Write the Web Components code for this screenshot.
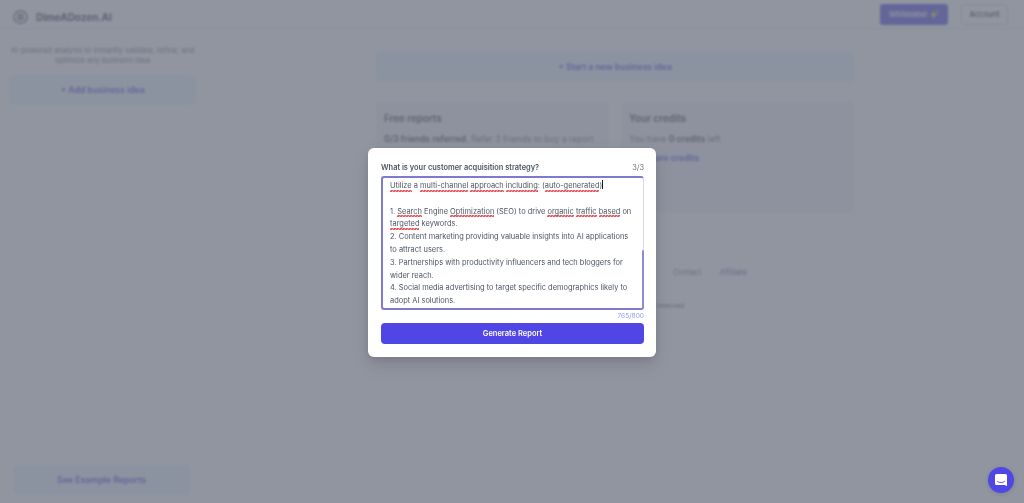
<!DOCTYPE html>
<html lang="en">
<head>
<meta charset="utf-8">
<title>DimeADozen.AI</title>
<style>
    html, body { margin: 0; height: 100%; background: #fff; overflow: hidden; }
    body { font-family: Inter, "Liberation Sans", sans-serif; }
</style>
</head>
<body>
<dad-app>
    <dad-header slot="header"></dad-header>
    <dad-sidebar slot="sidebar"></dad-sidebar>
    <dad-main slot="main"></dad-main>
</dad-app>
<dad-modal>
    <span slot="title">What is your customer acquisition strategy?</span>
    <span slot="step">3/3</span>
</dad-modal>
<dad-chat></dad-chat>

<script>
// base class: every element just stamps its html into an open shadow root
class Base extends HTMLElement {
    constructor(html) {
        super();
        const shadow = this.attachShadow({ mode: 'open' });
        const template = document.createElement('template');
        template.innerHTML = html;
        shadow.appendChild(template.content.cloneNode(true));
    }
}

class DadApp extends Base {
    constructor() {
        super(`
            <style>
                :host { display: flex; flex-direction: column; height: 503px; }
                .body { flex: 1; display: flex; min-height: 0; }
            </style>
            <slot name="header"></slot>
            <div class="body">
                <slot name="sidebar"></slot>
                <slot name="main"></slot>
            </div>
        `);
    }
}

class DadHeader extends Base {
    constructor() {
        super(`
            <style>
                :host {
                    display: flex; align-items: center; justify-content: space-between;
                    height: 29px; box-sizing: border-box; padding: 0 16px 0 13px;
                    border-bottom: 1px solid #e5e7eb;
                }
                .logo { display: flex; align-items: center; gap: 8px; margin-top: 6px; font-size: 9.9px; font-weight: 700; color: #374151; }
                .logo svg { display: block; }
                .actions { display: flex; align-items: center; gap: 13px; }
                .btn { font-size: 7.5px; font-weight: 500; height: 21px; display: flex; align-items: center; box-sizing: border-box; border-radius: 3px; }
                .white { background: #4f46e5; color: #fff; width: 68px; justify-content: center; gap: 3px; }
                .account { width: 47px; justify-content: center; border: 1px solid #d1d5db; color: #1f2937; }
            </style>
            <div class="logo">
                <svg width="15" height="14" viewBox="0 0 15 14" fill="none" stroke="#374151">
                    <ellipse cx="7.5" cy="7" rx="6.6" ry="6.2" stroke-width="1.2"/>
                    <rect x="5" y="4.5" width="5" height="5" stroke-width="1"/>
                    <path d="M7.5 4.5v5M5 7h5" stroke-width=".8"/>
                </svg>
                <span>DimeADozen.AI</span>
            </div>
            <div class="actions">
                <div class="btn white">Whitelabel
                    <svg width="9" height="9" viewBox="0 0 8 8" fill="#ffd23f">
                        <path d="M3.2 .6 4.2 3.2 6.8 4.2 4.2 5.2 3.2 8 2.2 5.2 0 4.2 2.2 3.2z"/>
                        <path d="M6.5 0 7 1 8 1.5 7 2 6.5 3 6 2 5 1.5 6 1z"/>
                    </svg>
                </div>
                <div class="btn account">Account</div>
            </div>
        `);
    }
}

class DadSidebar extends Base {
    constructor() {
        super(`
            <style>
                :host {
                    display: flex; flex-direction: column; width: 205px; flex: none;
                    box-sizing: border-box; padding: 17px 9px 8px;
                }
                p { margin: 0 0 9px; text-align: center; font-size: 7.45px; line-height: 10px; color: #6b7280; }
                .add { height: 30px; display: flex; align-items: center; justify-content: center; background: #eff6ff; border-radius: 5px; color: #4f46e5; font-size: 8.6px; font-weight: 600; }
                .example { margin: auto 6px 0 4px; height: 30px; display: flex; align-items: center; justify-content: center; background: #eff6ff; border-radius: 5px; color: #4f46e5; font-size: 8.7px; font-weight: 600; }
            </style>
            <p>AI-powered analysis to instantly validate, refine, and optimize any business idea</p>
            <div class="add">+ Add business idea</div>
            <div class="example">See Example Reports</div>
        `);
    }
}

class DadCard extends Base {
    constructor() {
        super(`
            <style>
                :host { display: block; background: #f3f4f6; border-radius: 4px; padding: 10px 8px; height: 111px; box-sizing: border-box; color: #6b7280; font-size: 8.6px; }
                h2 { margin: 0 0 8px; font-size: 9.8px; line-height: 13px; font-weight: 600; color: #374151; }
                div { line-height: 13px; }
            </style>
            <h2><slot name="title"></slot></h2>
            <div><slot></slot></div>
        `);
    }
}

class DadMain extends Base {
    constructor() {
        super(`
            <style>
                :host { display: block; flex: 1; min-width: 0; box-sizing: border-box; padding: 23px 170px 0 171px; }
                .start { height: 30px; display: flex; align-items: center; justify-content: center; background: #eff6ff; border-radius: 4px; color: #4f46e5; font-size: 8.55px; font-weight: 600; }
                .cards { display: grid; grid-template-columns: 233px 233px; gap: 12px; margin-top: 20px; }
                .link { color: #4f46e5; font-weight: 600; display: block; margin-top: 6px; }
                b { font-weight: 600; color: #374151; }
                .links { display: flex; gap: 18px; justify-content: flex-end; padding-right: 107px; margin-top: 55px; font-size: 7.7px; line-height: 10px; color: #6b7280; }
                .links span + span { color: #5f62a8; }
                .copy { text-align: right; padding-right: 170px; margin-top: 24px; font-size: 6.5px; line-height: 8px; color: #4b5563; }
            </style>
            <div class="start">+ Start a new business idea</div>
            <div class="cards">
                <dad-card>
                    <span slot="title">Free reports</span>
                    <b>0/3 friends referred.</b> Refer 3 friends to buy a report
                </dad-card>
                <dad-card>
                    <span slot="title">Your credits</span>
                    You have <b>0 credits</b> left.
                    <span class="link">Buy more credits</span>
                </dad-card>
            </div>
            <div class="links"><span>Contact</span><span>Affiliate</span></div>
            <div class="copy">All rights reserved</div>
        `);
    }
}

class DadModal extends Base {
    constructor() {
        super(`
            <style>
                :host {
                    position: fixed; inset: 0; display: block;
                    background: rgba(107, 114, 128, .75);
                    backdrop-filter: blur(1px);
                    color: #4b5563;
                }
                .box {
                    position: absolute; left: 368px; top: 148px; width: 288px; height: 209px;
                    box-sizing: border-box; padding: 13px 12px 0 13px;
                    background: #fff; border-radius: 6px;
                    box-shadow: 0 8px 18px rgba(0,0,0,.12), 0 3px 6px rgba(0,0,0,.08);
                    display: flex; flex-direction: column;
                }
                .head { display: flex; justify-content: space-between; align-items: center; height: 12px; margin-bottom: 3px; font-size: 7.45px; }
                .title { font-weight: 600; color: #4b5563; }
                .step { color: #6b7280; }
                .wrap { position: relative; height: 134px; }
                .area {
                    height: 134px; box-sizing: border-box;
                    border: 2px solid #7f79d0; border-right: 1px solid #d9d8ee; border-radius: 3px;
                    padding: 2px 8px 0 7px; font-size: 7.45px; line-height: 12.8px; color: #4b5563; white-space: pre-wrap; overflow: hidden;
                }
                /* scrollbar-looking strip lower down the right edge */
                .thumb { position: absolute; right: 0; top: 74px; bottom: 1px; width: 2px; background: #8f8ad6; border-radius: 1px; }
                /* spell check squiggle: two gradient layers make the zigzag */
                u {
                    text-decoration: none; padding-bottom: 1.5px;
                    background:
                        linear-gradient(135deg, transparent 35%, #e25a5f 35%, #e25a5f 65%, transparent 65%) 0 100% / 3px 2px repeat-x,
                        linear-gradient(45deg, transparent 35%, #e25a5f 35%, #e25a5f 65%, transparent 65%) 1.5px 100% / 3px 2px repeat-x;
                }
                .caret { display: inline-block; width: 1px; height: 9px; background: #111827; vertical-align: -1px; }
                .count { text-align: right; font-size: 6.6px; line-height: 13px; color: #8b9cf0; }
                .go { height: 21px; display: flex; align-items: center; justify-content: center; background: #4f46e5; border-radius: 4px; color: #fff; font-size: 7.5px; font-weight: 600; }
            </style>
            <div class="box">
                <div class="head">
                    <span class="title"><slot name="title"></slot></span>
                    <span class="step"><slot name="step"></slot></span>
                </div>
                <div class="wrap">
                <div class="area"><u>Utilize</u> a <u>multi-channel</u> <u>approach</u> <u>including</u>: (<u>auto-generated</u>)<span class="caret"></span>

1. <u>Search</u> Engine <u>Optimization</u> (SEO) to drive <u>organic</u> <u>traffic</u> <u>based</u> on <u>targeted</u> keywords.
2. Content marketing providing valuable insights into AI applications to attract users.
3. Partnerships with productivity influencers and tech bloggers for wider reach.
4. Social media advertising to target specific demographics likely to adopt AI solutions.</div>
                <div class="thumb"></div>
                </div>
                <div class="count">765/800</div>
                <div class="go">Generate Report</div>
            </div>
        `);
    }
}

class DadChat extends Base {
    constructor() {
        super(`
            <style>
                :host {
                    position: fixed; left: 988px; top: 467px; width: 26px; height: 26px; border-radius: 50%;
                    background: #4f46e5; display: flex; align-items: center; justify-content: center;
                    box-shadow: 0 1px 4px rgba(0,0,0,.15);
                }
                svg { display: block; }
            </style>
            <svg width="12" height="12" viewBox="0 0 12 12">
                <path d="M1.5 0h9A1.5 1.5 0 0 1 12 1.5V12l-2.5-1h-8A1.5 1.5 0 0 1 0 9.5v-8A1.5 1.5 0 0 1 1.5 0z" fill="#fff"/>
                <path d="M2.5 7.5c2 1.6 5 1.6 7 0" fill="none" stroke="#4f46e5" stroke-width=".9" stroke-linecap="round"/>
            </svg>
        `);
    }
}

customElements.define('dad-app', DadApp);
customElements.define('dad-header', DadHeader);
customElements.define('dad-sidebar', DadSidebar);
customElements.define('dad-card', DadCard);
customElements.define('dad-main', DadMain);
customElements.define('dad-modal', DadModal);
customElements.define('dad-chat', DadChat);
</script>
</body>
</html>
